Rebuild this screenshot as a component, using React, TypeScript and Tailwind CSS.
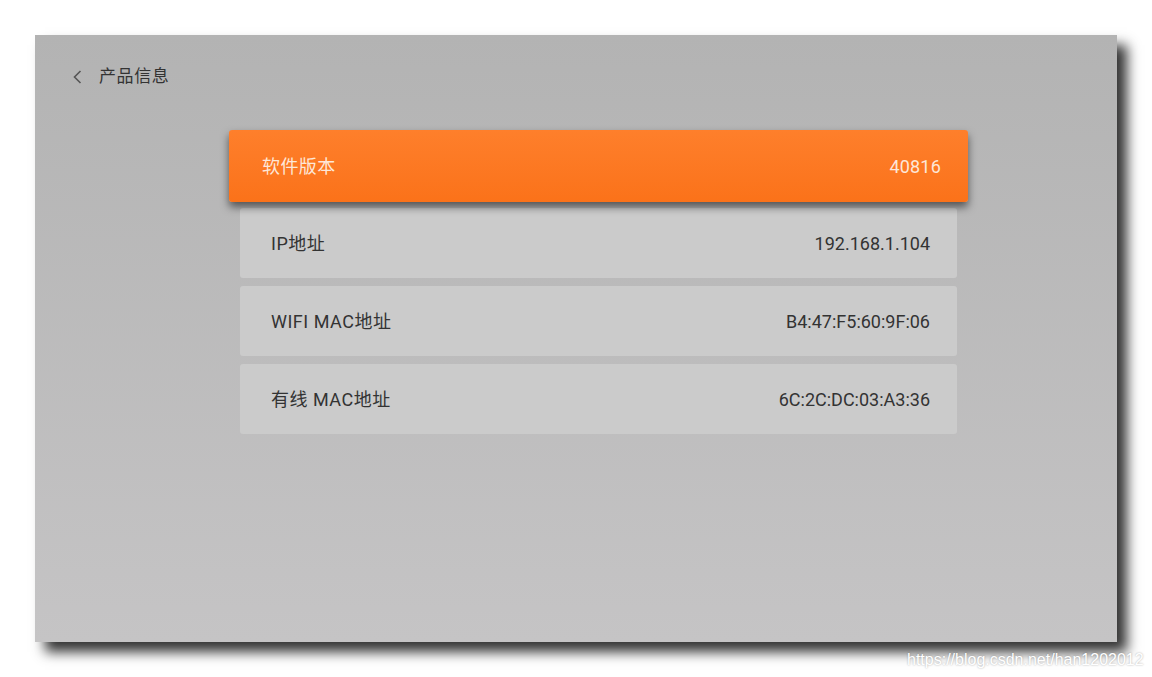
import React from "react";

const rows = [
  { label: "IP地址", value: "192.168.1.104" },
  { label: "WIFI MAC地址", value: "B4:47:F5:60:9F:06" },
  { label: "有线 MAC地址", value: "6C:2C:DC:03:A3:36" },
];

const font = "font-['Roboto','Noto_Sans_CJK_SC',sans-serif]";

export default function App() {
  return (
    <div className={`relative w-[1152px] h-[677px] bg-white overflow-hidden pt-[35px] pl-[35px] ${font}`}>
      {/* --- TV WINDOW --- */}
      <div className="w-[1082px] h-[607px] flex flex-col bg-gradient-to-b from-[#b3b3b3] to-[#c5c4c5] shadow-[10px_10px_12px_rgba(0,0,0,0.8)]">
        {/* header */}
        <div className="mt-[28px] ml-[37px] h-[28px] flex items-center gap-[16px] text-[#333333]">
          <svg width="11" height="16" viewBox="0 0 11 16" fill="none">
            <path d="M8.5 2 L2.5 8 L8.5 14" stroke="#555555" strokeWidth="1.6" />
          </svg>
          <span className="text-[17px] tracking-[0.6px]">产品信息</span>
        </div>

        {/* list */}
        <div className="mt-[39px] ml-[194px] w-[739px] flex flex-col">
          <div className="relative z-10 h-[72px] rounded-[3px] bg-gradient-to-b from-[#fe7f2b] to-[#fb7219] shadow-[0_5px_8px_rgba(0,0,0,0.55)] flex items-center justify-between pl-[33px] pr-[27px] text-[18px] text-[#fde7d8]">
            <span className="tracking-[0.4px]">软件版本</span>
            <span className="tracking-[0.2px]">40816</span>
          </div>
          <div className="mt-[6px] mx-[11px] flex flex-col gap-[8px]">
            {rows.map((row) => (
              <div
                key={row.label}
                className="h-[70px] rounded-[3px] bg-[#cbcbcb] flex items-center justify-between pl-[31px] pr-[27px] text-[18px] text-[#333333]"
              >
                <span className="tracking-[0.5px]">{row.label}</span>
                <span>{row.value}</span>
              </div>
            ))}
          </div>
        </div>
      </div>

      {/* watermark */}
      <div className="absolute left-[907px] top-[648px] text-[16px] text-white font-['Liberation_Sans',sans-serif] [text-shadow:0_0_2px_rgba(0,0,0,0.35)]">
        https://blog.csdn.net/han1202012
      </div>
    </div>
  );
}
